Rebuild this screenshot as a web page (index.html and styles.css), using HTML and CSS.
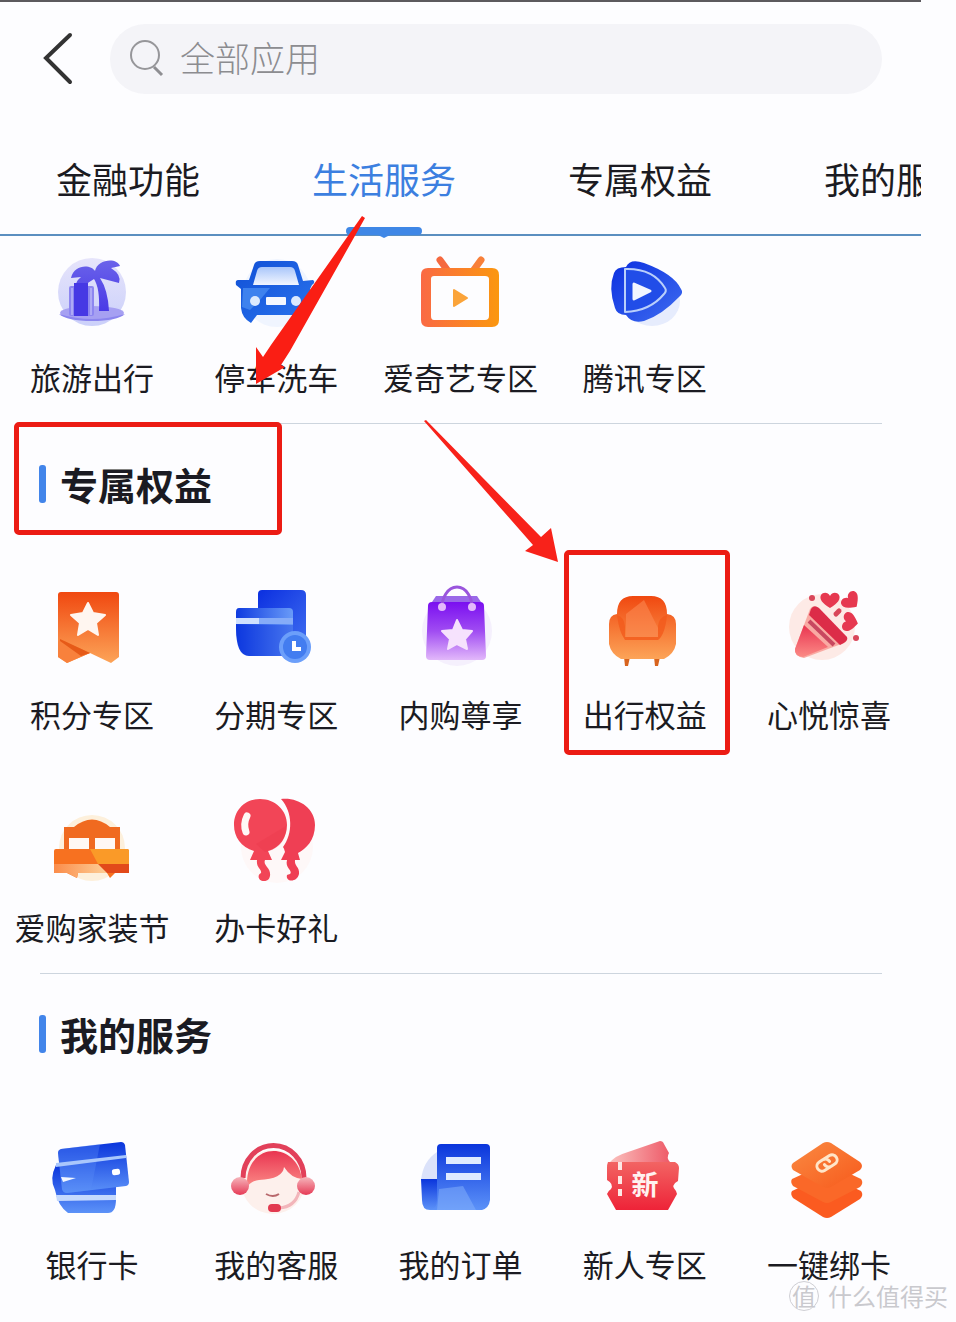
FILE: index.html
```html
<!DOCTYPE html>
<html lang="zh-CN">
<head>
<meta charset="utf-8">
<meta name="viewport" content="width=device-width, initial-scale=1">
<title>全部应用</title>
<link rel="stylesheet" href="styles.css">
</head>
<body>
<svg class="defs" width="0" height="0" aria-hidden="true">
  <defs>
    <linearGradient id="blueV" x1="0" y1="0" x2="0" y2="1"><stop offset="0" stop-color="#0a35dc"/><stop offset="1" stop-color="#5c92f8"/></linearGradient>
    <linearGradient id="blueCar" x1="0" y1="0" x2="1" y2="1"><stop offset="0" stop-color="#1150d6"/><stop offset="1" stop-color="#2a74ee"/></linearGradient>
    <linearGradient id="blueH" x1="0" y1="0" x2="1" y2="0"><stop offset="0" stop-color="#0f3be0"/><stop offset="1" stop-color="#699bf8"/></linearGradient>
    <linearGradient id="deepBlue" x1="0" y1="0" x2="1" y2="1"><stop offset="0" stop-color="#0b2fe0"/><stop offset="1" stop-color="#3f6df0"/></linearGradient>
    <linearGradient id="glass" x1="0" y1="0" x2="0" y2="1"><stop offset="0" stop-color="#a9c6fa"/><stop offset="1" stop-color="#f2f6ff"/></linearGradient>
    <linearGradient id="violet" x1="0" y1="0" x2="0" y2="1"><stop offset="0" stop-color="#6a62ea"/><stop offset="1" stop-color="#4a3ae6"/></linearGradient>
    <linearGradient id="lav" x1="0" y1="0" x2="0" y2="1"><stop offset="0" stop-color="#e6e4fb"/><stop offset="1" stop-color="#cbd0fa"/></linearGradient>
    <linearGradient id="tv" x1="0" y1="0" x2="1" y2="0"><stop offset="0" stop-color="#fa6a44"/><stop offset="1" stop-color="#fb970f"/></linearGradient>
    <linearGradient id="orangeV" x1="0" y1="0" x2="0" y2="1"><stop offset="0" stop-color="#f04810"/><stop offset="1" stop-color="#fca458"/></linearGradient>
    <linearGradient id="stack" x1="0" y1="0" x2="1" y2="1"><stop offset="0" stop-color="#fa8a42"/><stop offset="1" stop-color="#f75a1c"/></linearGradient>
    <linearGradient id="bag" x1="0" y1="0" x2="0" y2="1"><stop offset="0" stop-color="#7a0ff0"/><stop offset=".5" stop-color="#a04cf2"/><stop offset="1" stop-color="#e2b8fa"/></linearGradient>
    <linearGradient id="pinkV" x1="0" y1="0" x2="0" y2="1"><stop offset="0" stop-color="#e93450"/><stop offset="1" stop-color="#fb8a86"/></linearGradient>
    <linearGradient id="pinkUp" x1="0" y1="0" x2="0" y2="1"><stop offset="0" stop-color="#f6b6bc"/><stop offset="1" stop-color="#e63a56"/></linearGradient>
    <linearGradient id="redV" x1="0" y1="0" x2="0" y2="1"><stop offset="0" stop-color="#f26463"/><stop offset="1" stop-color="#ee2338"/></linearGradient>
    <linearGradient id="ticketBack" x1="0" y1="0" x2="1" y2="0"><stop offset="0" stop-color="#fbc3c0"/><stop offset="1" stop-color="#ee5a68"/></linearGradient>
    <linearGradient id="bedBase" x1="0" y1="0" x2="1" y2="0"><stop offset="0" stop-color="#fb8c4a"/><stop offset="1" stop-color="#fdd098"/></linearGradient>
    <path id="heart" d="M0 8C-8 3-11-1-9-5-7-8-2-8 0-4 2-8 7-8 9-5 11-1 8 3 0 8Z"/>
  </defs>
</svg>

<main class="app">
  <header class="topbar">
    <button class="back" type="button" aria-label="返回">
      <svg viewBox="0 0 34 56" width="34" height="56"><path d="M28 4 4 27l24 24" fill="none" stroke="#333" stroke-width="4" stroke-linecap="round"/></svg>
    </button>
    <form class="search" role="search">
      <svg class="search-icon" viewBox="0 0 36 38" width="36" height="38" aria-hidden="true"><circle cx="15" cy="15" r="14" fill="none" stroke="#96969a" stroke-width="2"/><path d="m24 27 8 8" stroke="#8e8e92" stroke-width="3"/></svg>
      <input class="search-input" type="text" placeholder="全部应用" aria-label="全部应用">
    </form>
  </header>

  <nav class="tabs">
    <button class="tab" type="button">金融功能</button>
    <button class="tab tab-active" type="button">生活服务<svg class="tab-mark" viewBox="0 0 76 12" width="76" height="12" aria-hidden="true"><path d="M4 0h68q4 0 4 4t-4 4H44l-6 3-6-3H4Q0 8 0 4t4-4Z" fill="#3f87e6"/></svg></button>
    <button class="tab" type="button">专属权益</button>
    <button class="tab" type="button">我的服务</button>
  </nav>

  <section class="group group-first">
    <div class="grid">
      <a class="item" href="#">
        <svg class="icon" viewBox="0 0 90 90"><circle cx="45" cy="45" r="34" fill="url(#lav)"/><ellipse cx="45" cy="66" rx="32" ry="7" fill="#a6a0f2"/><path d="M12 67q33 10 66 0-8 7-33 7T12 67Z" fill="#8b85ee"/><path d="M48 24C44 17 27 17 24 31l10-1q-6 5-5 10l4 1 14-9q6 9 5 32h10q-1-21-9-33l19 5q3-8-8-15l9-2C70 10 50 12 48 24Z" fill="url(#violet)"/><rect x="22" y="39" width="25" height="30" rx="2" fill="#8d86f0"/><path d="M27 36h14v33H27z" fill="#4638e4"/><path d="M25 41v27M44 41v27" stroke="#cfcdfb"/></svg>
        <span class="label">旅游出行</span>
      </a>
      <a class="item" href="#">
        <svg class="icon" viewBox="0 0 90 90"><circle cx="46" cy="46" r="34" fill="#f0f5ff"/><path d="M23 18q1-4 6-4h32q5 0 6 4l5 16 10-1q3 2-1 5l-2 4q3 12-1 22l-3 10-7 2-3-8H26l-6 8q-9-5-10-15V42l-5-4q-1-5 2-5h11Z" fill="url(#blueCar)"/><path d="M26 24q1-4 5-4h28q4 0 5 4l4 14H22Z" fill="url(#glass)"/><path d="M12 41h27l-10 12-10 10-8-3Z" fill="#3e82ee"/><circle cx="24" cy="54" r="5" fill="#dceafe"/><circle cx="65" cy="54" r="5" fill="#dceafe"/><rect x="35" y="50" width="20" height="8" rx="1" fill="#f4f8ff"/></svg>
        <span class="label">停车洗车</span>
      </a>
      <a class="item" href="#">
        <svg class="icon" viewBox="0 0 90 90"><path d="m25 13 8 11" stroke="#f5693f" stroke-width="7" stroke-linecap="round"/><path d="m66 13-8 11" stroke="#f8803a" stroke-width="7" stroke-linecap="round"/><path d="M13 21h64q7 0 7 7v45q0 7-7 7H13q-7 0-7-7V28q0-7 7-7Zm6 8q-3 0-3 3v37q0 4 3 4h51q4 0 4-4V32q0-3-4-3Z" fill="url(#tv)" fill-rule="evenodd"/><path d="M39 43v16l13-8Z" fill="#fba43a" stroke="#fba43a" stroke-width="2" stroke-linejoin="round"/></svg>
        <span class="label">爱奇艺专区</span>
      </a>
      <a class="item" href="#">
        <svg class="icon" viewBox="0 0 90 90"><ellipse cx="52" cy="54" rx="28" ry="25" fill="#e6ecfd"/><path d="M26 20q4-9 18-4 30 11 37 26 3 4-2 8-17 18-35 24-12 3-18-6-9 0-11-7-7-20-1-35 2-6 12-6Z" fill="url(#deepBlue)"/><path d="M25 22q28-1 40 19 2 3-1 6-14 17-39 18Z" fill="#214de8" stroke="#b9cffb" stroke-width="2" stroke-linejoin="round"/><path d="M34 37v15l16-8Z" fill="#f2f6ff" stroke="#f2f6ff" stroke-width="3" stroke-linejoin="round"/></svg>
        <span class="label">腾讯专区</span>
      </a>
    </div>
  </section>

  <section class="group">
    <h2 class="title title-marked">专属权益</h2>
    <div class="grid">
      <a class="item" href="#">
        <svg class="icon" viewBox="0 0 90 90"><path d="M14 8h55q3 0 3 3v62l-8 6-21-10-23 10-9-6V11q0-3 3-3Z" fill="url(#orangeV)"/><path d="m13 55 30 14-23 10-9-6V58Z" fill="#f8813c"/><path d="m13 55 30 14-9 3-21-15Z" fill="#e65a18"/><path d="m41 19 5 10 12 2-9 8 2 12-10-6-10 6 2-12-9-8 12-2Z" fill="#fff6f0" stroke="#fff6f0" stroke-width="2" stroke-linejoin="round"/></svg>
        <span class="label">积分专区</span>
      </a>
      <a class="item" href="#">
        <svg class="icon" viewBox="0 0 90 90"><path d="M31 6h39q5 0 5 5v50H27V10q0-4 4-4Z" fill="url(#deepBlue)"/><path d="M8 24h50q4 0 4 4v44H18Q5 72 5 44V28q0-4 3-4Z" fill="url(#blueH)"/><path d="M5 41h57v31H18Q6 71 5 41Z" fill="#0a30dc" opacity=".35"/><path d="M5 34h57v6H5z" fill="#cfe0fe"/><path d="M28 34h34v6H28z" fill="#6d9bf6" opacity=".75"/><circle cx="64" cy="63" r="16" fill="#6c9ffa"/><circle cx="64" cy="63" r="12" fill="#437df0"/><path d="M63 57v8h7" fill="none" stroke="#fff" stroke-width="4"/></svg>
        <span class="label">分期专区</span>
      </a>
      <a class="item" href="#">
        <svg class="icon" viewBox="0 0 90 90"><circle cx="42" cy="47" r="35" fill="#f5f0fd"/><path d="m17 18 4-6h41l4 6Z" fill="#9a69e8"/><path d="M17 18h48q4 0 4 4l2 50q0 4-4 4H15q-4 0-4-4l2-50q0-4 4-4Z" fill="url(#bag)"/><path d="M27 23c0-8 5-20 15-20s15 12 15 20" fill="none" stroke="#9a55dd" stroke-width="3"/><circle cx="27" cy="23" r="4" fill="#e3b8fb"/><circle cx="57" cy="23" r="4" fill="#e3b8fb"/><path d="m42 36 5 10 10 1-7 8 2 10-10-5-9 5 2-10-8-8 11-1Z" fill="#f6e2fd" stroke="#f6e2fd" stroke-width="2" stroke-linejoin="round"/></svg>
        <span class="label">内购尊享</span>
      </a>
      <a class="item item-marked" href="#">
        <svg class="icon" viewBox="0 0 90 90"><path d="M24 73h6l-2 9h-3zM54 73h6l-2 9h-3z" fill="#d8641e"/><path d="M17 30q0-18 16-18h18q16 0 16 18 9 1 9 10v20q-2 10-12 15H21Q11 70 9 60V40q0-9 8-10Z" fill="url(#orangeV)"/><path d="M17 31q7 2 8 11v11h33V42q1-9 9-11-2 20-9 25H25q-6-8-8-25Z" fill="#f35a1c" opacity=".8"/><path d="M26 30 44 16l14 28v9H26Z" fill="#fc8c55" opacity=".55"/></svg>
        <span class="label">出行权益</span>
      </a>
      <a class="item" href="#">
        <svg class="icon" viewBox="0 0 90 90"><circle cx="38" cy="43" r="33" fill="#fdeae6"/><path d="M26 25q3-5 7-1l29 29q2 4-2 6L20 74q-9-1-9-9Z" fill="#f9aaa3"/><path d="m20 41 24 22-25 10q-9-1-8-8Z" fill="url(#pinkV)"/><path d="M27 25q3-5 8-1l28 29q2 4-7 8L25 31Z" fill="#dc2c48"/><path d="m25 37 25 24" stroke="#c84860" stroke-width="4"/><g fill="#e63850"><use href="#heart" x="46" y="16"/><use href="#heart" transform="translate(67 17) rotate(-45)"/><use href="#heart" transform="translate(66 38) rotate(-80)"/></g><circle cx="28" cy="14" r="3" fill="#d94659"/><circle cx="72" cy="54" r="3" fill="#d94659"/><path d="m52 30 3-3" stroke="#d94659" stroke-width="5" stroke-linecap="round"/></svg>
        <span class="label">心悦惊喜</span>
      </a>
      <a class="item" href="#">
        <svg class="icon" viewBox="0 0 90 90"><circle cx="45" cy="51" r="33" fill="#fdf0dc"/><path d="M17 30h10q18-15 36 0h10v25H17Z" fill="#f06a20"/><path d="M22 41h20v11H22zM48 41h20v11H48z" fill="#fff8f4"/><path d="M9 52h71q2 0 2 2v22H68l-5 5-3-5H31l-1 5-10-5H7V54q0-2 2-2Z" fill="#f77120"/><path d="M7 67h54v9H31l-1 5-10-5H7Z" fill="url(#bedBase)"/><path d="M43 52h37q2 0 2 2v13H51Z" fill="#fa9a28"/><path d="M51 67h31v9H60Z" fill="#e2491a"/></svg>
        <span class="label">爱购家装节</span>
      </a>
      <a class="item" href="#">
        <svg class="icon" viewBox="0 0 90 90"><circle cx="46" cy="50" r="36" fill="#fef8f8"/><path d="M50 2c17-2 34 9 34 26 0 15-9 24-17 28l2 7h-5c-1 6 5 7 4 14-2 9-14 8-12 1 4-1 5-2 2-6-2-3-3-5-2-9h-6l4-8q-1-4-2-5C62 37 62 15 50 2Z" fill="#ef3f54"/><path d="M29 2C14 2 3 13 3 28c0 12 7 22 20 26l-4 9h7c-1 8 5 9 4 13-4 2-3 8 3 8 7 0 8-9 3-14-2-3-3-4-2-7h7l-4-9c12-3 19-14 19-26C56 13 44 2 29 2Z" fill="#f24557"/><path d="M55 29 25 47l9 8q21-4 21-26Z" fill="#e73549" opacity=".3"/><path d="M16 19q-4 8-1 16" fill="none" stroke="#fff8f6" stroke-width="7" stroke-linecap="round"/></svg>
        <span class="label">办卡好礼</span>
      </a>
    </div>
  </section>

  <section class="group">
    <h2 class="title">我的服务</h2>
    <div class="grid">
      <a class="item" href="#">
        <svg class="icon" viewBox="0 0 90 90"><path d="M9 31h60v34q0 14-8 14H21Q11 72 8 56 2 45 9 31Z" fill="url(#blueV)"/><path d="M9 61h60v5L10 67Z" fill="#c5d9fd"/><path d="m14 15 60-7q3 0 4 3l4 37q0 3-3 4l-59 7q-4 0-5-4l-4-36q0-3 3-4Z" fill="url(#blueV)"/><path d="m53 10-9 46-24 3q-4 0-5-4l-4-36q0-3 3-4Z" fill="#5a8cf5" opacity=".35"/><path d="m9 29 70-8v3L9 33Z" fill="#a9c7fc"/><path d="m14 43 15 1-13 4Z" fill="#f2f7ff"/><rect x="65" y="35" width="8" height="6" rx="2" fill="#fff" transform="rotate(-7 69 38)"/></svg>
        <span class="label">银行卡</span>
      </a>
      <a class="item" href="#">
        <svg class="icon" viewBox="0 0 90 90"><circle cx="42" cy="48" r="32" fill="#fdf0ec"/><path d="M12 44a30 32 0 0 1 61 0" fill="none" stroke="#e2405a" stroke-width="5"/><path d="M16 49c0-42 50-42 55-4q-11-1-18-12-1 12-25 13-8 1-12 7Z" fill="url(#pinkV)"/><circle cx="9" cy="52" r="9" fill="url(#pinkUp)"/><circle cx="75" cy="52" r="9" fill="url(#pinkUp)"/><path d="M35 60q7 4 13 0" fill="none" stroke="#b8686c" stroke-width="2"/><path d="M48 74q16-1 20-16" fill="none" stroke="#f2b5ba" stroke-width="3"/><rect x="37" y="70" width="13" height="8" rx="4" fill="#e23a50"/></svg>
        <span class="label">我的客服</span>
      </a>
      <a class="item" href="#">
        <svg class="icon" viewBox="0 0 90 90"><path d="M22 18Q8 27 6 46h16Z" fill="#dbe2fa"/><path d="M6 45h16v31h-7q-8 0-8-10Z" fill="url(#blueV)"/><path d="M26 10h45q4 0 4 4v52q-1 8-8 10H15q7-1 7-10V14q0-4 4-4Z" fill="url(#blueV)"/><path d="m48 52 13 24H22l2-21Z" fill="#85b1fc" opacity=".5"/><path d="M31 23h35v7H31zM31 39h35v7H31z" fill="#dfebff"/></svg>
        <span class="label">我的订单</span>
      </a>
      <a class="item" href="#">
        <svg class="icon" viewBox="0 0 90 90"><path d="M8 30q8-9 20-12L60 7q3 0 4 3l5 9q-3 5 1 9L8 36Z" fill="url(#ticketBack)"/><path d="M8 28h67q4 2 4 6l-1 13q-8 4-2 10l1 3-9 16H16L7 60q1-3 4-5 3-5-4-9V34Q7 30 8 28Z" fill="url(#redV)"/><path d="M20 28v8M20 42v8M20 55v7" stroke="#fde8e6" stroke-width="4"/><text class="ticket-text" x="45" y="61" text-anchor="middle">新</text></svg>
        <span class="label">新人专区</span>
      </a>
      <a class="item" href="#">
        <svg class="icon" viewBox="0 0 90 90"><path d="m8 57 35-16 34 16q3 4-1 8L47 83q-4 2-8 0L9 64q-3-4-1-7Z" fill="#fb5b20"/><path d="m8 45 35-16 34 16q3 4-1 8L47 68q-4 2-8 0L9 52q-3-4-1-7Z" fill="#fa6828"/><path d="M9 29 39 9q4-2 8 0l29 19q4 4 0 8L47 53q-4 2-8 0L9 36q-3-4 0-7Z" fill="url(#stack)"/><g transform="translate(43 29) rotate(-32)" fill="none" stroke="#ffe5c8" stroke-width="3" stroke-linecap="round"><path d="M0 5h-6a5 5 0 0 1 0-10h4a5 5 0 0 1 5 5"/><path d="M0-5h6a5 5 0 0 1 0 10H2a5 5 0 0 1-5-5"/></g></svg>
        <span class="label">一键绑卡</span>
      </a>
    </div>
  </section>

  <svg class="arrow arrow-left" viewBox="0 0 112 170" width="112" height="170" aria-hidden="true"><path d="m108 0 3 2-75 133-9 14 4 2-29 17 0-37 7 10 8-12Z" fill="#fa1e14"/></svg>
  <svg class="arrow arrow-right" viewBox="0 0 138 144" width="138" height="144" aria-hidden="true"><path d="m0 1 2-1 115 117 10-9 7 34-33-11 8-6Z" fill="#f8221a"/></svg>
</main>

<div class="watermark"><span class="watermark-badge">值</span><span>什么值得买</span></div>
</body>
</html>
```

FILE: styles.css
```css
*,
*::before,
*::after {
  box-sizing: border-box;
}

body {
  position: relative;
  min-height: 100vh;
  margin: 0;
  background: #fdfdff;
  color: #1b1b22;
  font-family: "Noto Sans CJK SC", "Noto Sans", sans-serif;
}

button,
input {
  margin: 0;
  padding: 0;
  border: 0;
  background: none;
  color: inherit;
  font: inherit;
}

.defs {
  position: absolute;
}

.app {
  position: relative;
  margin-right: 35px;
  border-top: 2px solid #5c5a5e;
}

.topbar {
  display: flex;
  align-items: center;
  gap: 34px;
  padding: 22px 39px 0 42px;
}

.back,
.back svg {
  display: block;
}

.search {
  display: flex;
  flex: 1;
  align-items: center;
  gap: 14px;
  height: 70px;
  padding: 0 20px;
  border-radius: 35px;
  background: #f4f4f8;
}

.search-icon {
  flex: none;
}

.search-input {
  flex: 1;
  min-width: 0;
  height: 60px;
  padding-bottom: 6px;
  font-size: 35px;
  font-weight: 300;
  outline: none;
}

.search-input::placeholder {
  color: #8c8c90;
  opacity: 1;
}

.tabs {
  display: flex;
  gap: 112px;
  padding: 58px 0 30px 56px;
  overflow-x: clip;
  border-bottom: 2px solid #5b8fc0;
}

.tab {
  position: relative;
  flex: none;
  font-size: 36px;
  line-height: 52px;
  white-space: nowrap;
}

.tab-active {
  color: #3c7fe0;
}

.tab-mark {
  position: absolute;
  top: 75px;
  left: 34px;
}

.group {
  padding: 32px 0 26px;
}

.group-first {
  padding-top: 11px;
}

.group + .group::before {
  display: block;
  height: 1px;
  margin: -32px 39px 32px 40px;
  background: #cdd5de;
  content: "";
}

.title {
  position: relative;
  display: flex;
  align-items: center;
  gap: 14px;
  margin: 0 0 72px;
  padding-left: 39px;
  font-size: 38px;
  font-weight: 700;
  line-height: 56px;
}

.title::before {
  width: 7px;
  height: 38px;
  border-radius: 3px;
  background: #4285ea;
  content: "";
}

.title-marked::after {
  position: absolute;
  top: -34px;
  left: 14px;
  width: 268px;
  height: 113px;
  border: 5px solid #ec1c14;
  border-radius: 5px;
  content: "";
}

.grid {
  display: grid;
  grid-template-columns: repeat(5, 1fr);
  row-gap: 63px;
}

.item {
  position: relative;
  display: flex;
  flex-direction: column;
  align-items: center;
  gap: 20px;
  color: inherit;
  text-decoration: none;
}

.item-marked::after {
  position: absolute;
  top: -34px;
  left: 11px;
  width: 166px;
  height: 205px;
  border: 5px solid #ec1c14;
  border-radius: 5px;
  content: "";
}

.icon {
  width: 90px;
  height: 90px;
}

.label {
  font-size: 31px;
  line-height: 40px;
  white-space: nowrap;
}

.ticket-text {
  fill: #fff2f0;
  font-size: 27px;
  font-weight: 700;
}

.arrow {
  position: absolute;
  pointer-events: none;
}

.arrow-left {
  top: 214px;
  left: 254px;
}

.arrow-right {
  top: 418px;
  left: 424px;
}

.watermark {
  position: absolute;
  right: 8px;
  bottom: 8px;
  display: flex;
  align-items: center;
  gap: 9px;
  color: #c9c9ce;
  font-size: 24px;
  line-height: 36px;
  text-shadow: 0 0 2px #fff;
}

.watermark-badge {
  width: 30px;
  height: 30px;
  border: 1px solid #cfcfd4;
  border-radius: 50%;
  line-height: 28px;
  text-align: center;
}
```
